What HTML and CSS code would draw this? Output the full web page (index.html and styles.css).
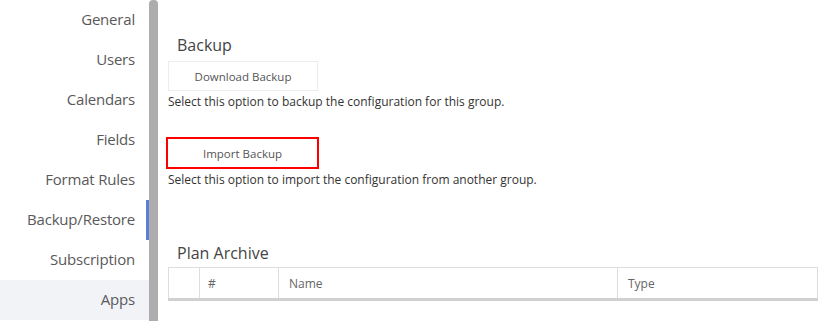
FILE: index.html
```html
<!DOCTYPE html>
<html lang="en">
<head>
    <meta charset="UTF-8">
    <meta name="viewport" content="width=device-width, initial-scale=1.0">
    <title>Settings - Backup/Restore</title>
    <link rel="stylesheet" href="styles.css">
</head>
<body>

<div class="layout">
    <!-- left menu -->
    <ul class="side-menu">
        <li>General</li>
        <li>Users</li>
        <li>Calendars</li>
        <li>Fields</li>
        <li>Format Rules</li>
        <li class="active">Backup/Restore</li>
        <li>Subscription</li>
        <li class="hover">Apps</li>
    </ul>
    <div class="scrollbar"><div class="thumb"></div></div>

    <!-- content -->
    <div class="content">
        <h3 class="section-title">Backup</h3>
        <button class="btn">Download Backup</button>
        <p class="hint">Select this option to backup the configuration for this group.</p>

        <button class="btn btn-marked">Import Backup</button>
        <p class="hint">Select this option to import the configuration from another group.</p>

        <h3 class="section-title archive-title">Plan Archive</h3>
        <table class="archive">
            <thead>
                <tr>
                    <th class="col-check"></th>
                    <th class="col-num">#</th>
                    <th class="col-name">Name</th>
                    <th>Type</th>
                </tr>
            </thead>
        </table>
    </div>
</div>

</body>
</html>
```

FILE: styles.css
```css
body {
    font-family: "Open Sans", "Noto Sans", sans-serif;
    margin: 0;
    padding: 0;
    background-color: #fff;
    color: #333;
    overflow: hidden;
}
.layout {
    display: flex;
    height: 321px;
}
.side-menu {
    list-style: none;
    margin: 0;
    padding: 0;
    width: 149px;
    flex-shrink: 0;
}
.side-menu li {
    height: 40px;
    line-height: 38px;
    text-align: right;
    padding-right: 11px;
    font-size: 15px;
    color: #595959;
    letter-spacing: -0.2px;
    border-right: 3px solid transparent;
    box-sizing: border-box;
}
.side-menu li.active {
    border-right-color: #5b7fd6;
}
.side-menu li.hover {
    background-color: #f2f3f7;
}
.scrollbar {
    width: 9px;
    flex-shrink: 0;
}
.scrollbar .thumb {
    height: 100%;
    background-color: #adadad;
    border-radius: 4px 4px 0 0;
}
.content {
    flex: 1;
    padding: 35px 2px 0 10px;
}
.section-title {
    font-size: 16px;
    font-weight: normal;
    color: #444;
    margin: 0 0 6px 9px;
    line-height: 20px;
}
.archive-title {
    margin-top: 55px;
    margin-bottom: 4px;
}
.btn {
    display: block;
    width: 150px;
    height: 30px;
    background: #fff;
    border: 1px solid #ececec;
    font-family: inherit;
    font-size: 11.5px;
    color: #555;
    padding: 0;
}
.btn-marked {
    margin-top: 27px;
    width: 153px;
    height: 32px;
    margin-left: -2px;
    border: 2px solid #f00;
}
.hint {
    font-size: 12px;
    margin: 3px 0 0;
    line-height: 16px;
}
.archive {
    width: 650px;
    border-collapse: collapse;
    table-layout: fixed;
}
.archive th {
    box-sizing: border-box;
    height: 32px;
    border: 1px solid #ddd;
    border-bottom: 3px solid #d0d0d0;
    text-align: left;
    font-weight: normal;
    font-size: 12px;
    color: #666;
    padding: 0 10px;
}
.archive .col-check {
    width: 31px;
}
.archive .col-num {
    width: 79px;
    padding-left: 8px;
}
.archive .col-name {
    width: 339px;
}
```
